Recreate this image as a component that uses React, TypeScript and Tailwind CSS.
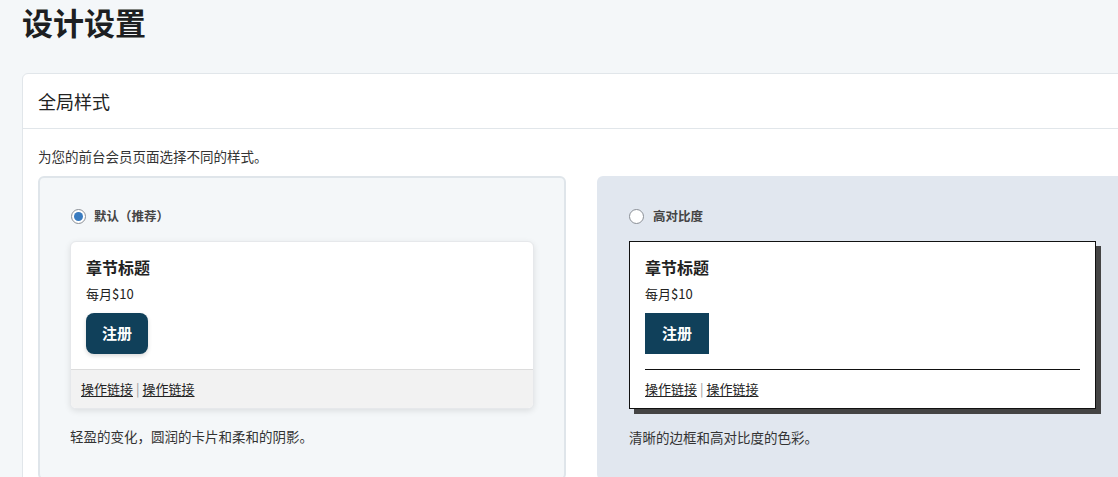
import React from "react";

const font = { fontFamily: '"Noto Sans CJK SC", "Noto Sans", sans-serif' };

function Radio({ checked }: { checked: boolean }) {
  return checked ? (
    <span className="flex h-[15px] w-[15px] items-center justify-center rounded-full border border-[#8a8f96] bg-white">
      <span className="h-[9px] w-[9px] rounded-full bg-[#3a7cc0]" />
    </span>
  ) : (
    <span className="h-[15px] w-[15px] rounded-full border border-[#8a8f96] bg-white" />
  );
}

function Links() {
  return (
    <div className="flex items-center text-[13px] text-[#222]">
      <span className="underline underline-offset-2">操作链接</span>
      <span className="mx-[3px] text-[#999]">|</span>
      <span className="underline underline-offset-2">操作链接</span>
    </div>
  );
}

export default function App() {
  return (
    <div className="h-[477px] w-full overflow-hidden bg-[#f4f7f9] text-[#222]" style={font}>
      <div className="px-[22px]">
        <h1 className="h-[44px] text-[31px] font-bold leading-[44px] text-[#1d1f22]">设计设置</h1>
        <div className="mt-[29px] w-[1127px] rounded-[6px] border border-[#e1e6ea] bg-white">
          <div className="flex h-[55px] items-center border-b border-[#e1e6ea] px-[15px] text-[18px]">全局样式</div>
          <div className="px-[15px] pt-[17px] pb-[16px]">
            <p className="text-[13.5px] leading-[20px] text-[#333]">为您的前台会员页面选择不同的样式。</p>
            <div className="mt-[10px] grid grid-cols-[528px_1fr] gap-[31px]">
              <div className="rounded-[6px] border-2 border-[#dfe5ea] bg-[#f4f7f9] px-[30px] pt-[29px] pb-[32px]">
                <div className="flex items-center gap-[8px] pl-[1px]">
                  <Radio checked />
                  <span className="text-[12.5px] font-semibold text-[#444]">默认（推荐）</span>
                </div>
                <div className="mt-[15px] overflow-hidden rounded-[6px] border border-[#e6e8eb] bg-white shadow-[0_2px_6px_rgba(0,0,0,0.1)]">
                  <div className="px-[15px] pt-[13px] pb-[15px]">
                    <div className="text-[16px] font-bold leading-[24px]">章节标题</div>
                    <div className="mt-[5px] text-[13px] leading-[20px]">每月$10</div>
                    <button className="mt-[9px] h-[41px] rounded-[8px] bg-[#10405a] px-[16px] text-[15px] font-bold text-white shadow-[0_2px_4px_rgba(0,0,0,0.15)]">注册</button>
                  </div>
                  <div className="flex h-[39px] items-center border-t border-[#dcdcdc] bg-[#f2f2f2] px-[10px]">
                    <Links />
                  </div>
                </div>
                <p className="mt-[17px] text-[13.5px] leading-[20px] text-[#333]">轻盈的变化，圆润的卡片和柔和的阴影。</p>
              </div>
              <div className="rounded-[6px] bg-[#e1e7ef] px-[32px] pt-[31px] pb-[32px]">
                <div className="flex items-center gap-[9px]">
                  <Radio checked={false} />
                  <span className="text-[12.5px] font-semibold text-[#444]">高对比度</span>
                </div>
                <div className="mt-[15px] mr-[5px] border border-[#111] bg-white shadow-[5px_5px_0_#444]">
                  <div className="px-[15px] pt-[13px]">
                    <div className="text-[16px] font-bold leading-[24px]">章节标题</div>
                    <div className="mt-[5px] text-[13px] leading-[20px]">每月$10</div>
                    <button className="mt-[9px] mb-[15px] h-[41px] bg-[#10405a] px-[17px] text-[15px] font-bold text-white">注册</button>
                    <div className="border-t border-[#111]" />
                    <div className="flex h-[38px] items-center">
                      <Links />
                    </div>
                  </div>
                </div>
                <p className="mt-[18px] text-[13.5px] leading-[20px] text-[#333]">清晰的边框和高对比度的色彩。</p>
              </div>
            </div>
          </div>
        </div>
      </div>
    </div>
  );
}
